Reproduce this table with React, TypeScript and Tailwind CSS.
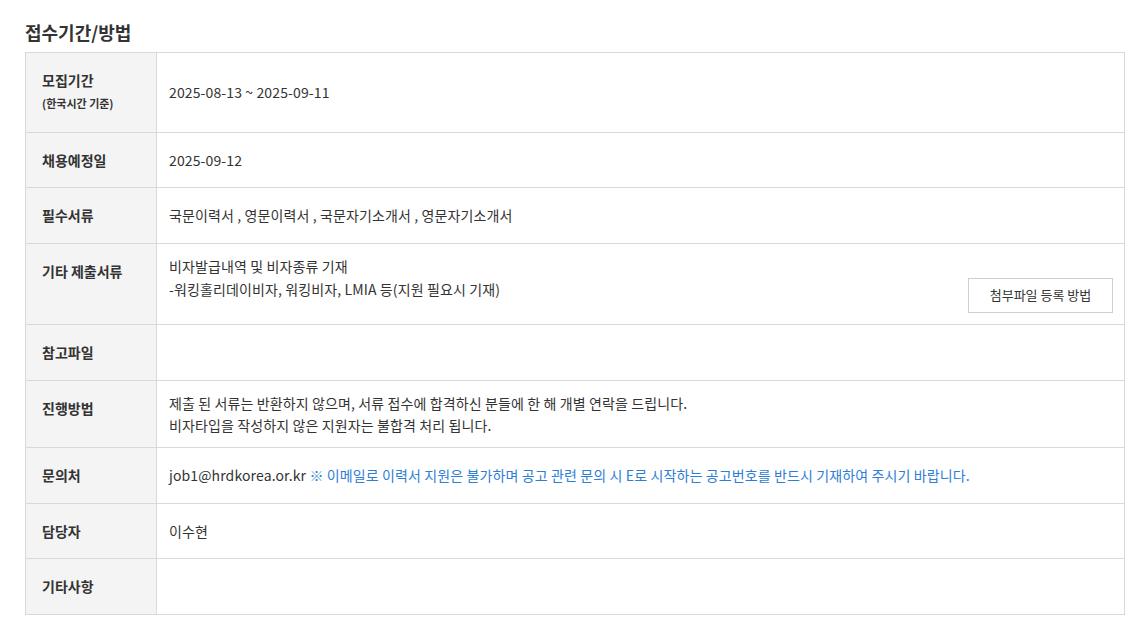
import React from "react";

const font = { fontFamily: '"Noto Sans CJK KR", "Noto Sans", sans-serif' };

function Row({
  h,
  label,
  children,
}: {
  h: string;
  label: React.ReactNode;
  children?: React.ReactNode;
}) {
  return (
    <div className={`grid grid-cols-[131px_1fr] ${h} border-b border-[#d9d9d9]`}>
      <div className="bg-[#f4f4f4] border-r border-[#d9d9d9] pl-[16px] pt-[16px]">{label}</div>
      <div className="flex flex-col justify-center pl-[12px] pr-[11px] pb-[1px] text-[14px] leading-[22px] tracking-[0.12px] text-[#333]">
        {children}
      </div>
    </div>
  );
}

function Label({ children }: { children: React.ReactNode }) {
  return <div className="text-[14px] leading-[22px] font-bold text-[#333]">{children}</div>;
}

export default function App() {
  return (
    <div className="bg-white w-[1148px] h-[627px]" style={font}>
      <div className="pl-[25px] pt-[20px]">
        <h2 className="text-[18px] leading-[24px] font-bold text-[#333] mb-[8px]">접수기간/방법</h2>
        <div className="w-[1100px] border-t border-l border-r border-[#d9d9d9]">
          <Row
            h="h-[80px]"
            label={
              <>
                <Label>모집기간</Label>
                <div className="mt-[4px] text-[11px] leading-[16px] font-bold text-[#333]">(한국시간 기준)</div>
              </>
            }
          >
            <div>2025-08-13 ~ 2025-09-11</div>
          </Row>
          <Row h="h-[55px]" label={<Label>채용예정일</Label>}>
            <div>2025-09-12</div>
          </Row>
          <Row h="h-[56px]" label={<Label>필수서류</Label>}>
            <div>국문이력서 , 영문이력서 , 국문자기소개서 , 영문자기소개서</div>
          </Row>
          <Row h="h-[81px]" label={<Label>기타 제출서류</Label>}>
            <div className="leading-[23px]">
              <div>비자발급내역 및 비자종류 기재</div>
              <div>-워킹홀리데이비자, 워킹비자, LMIA 등(지원 필요시 기재)</div>
            </div>
            <button className="self-end -mt-[23px] h-[35px] w-[145px] border border-[#cfcfcf] bg-white text-[13px] tracking-normal text-[#333]">
              첨부파일 등록 방법
            </button>
          </Row>
          <Row h="h-[56px]" label={<Label>참고파일</Label>} />
          <Row h="h-[67px]" label={<Label>진행방법</Label>}>
            <div>제출 된 서류는 반환하지 않으며, 서류 접수에 합격하신 분들에 한 해 개별 연락을 드립니다.</div>
            <div>비자타입을 작성하지 않은 지원자는 불합격 처리 됩니다.</div>
          </Row>
          <Row h="h-[56px]" label={<Label>문의처</Label>}>
            <div>
              job1@hrdkorea.or.kr{" "}
              <span className="text-[#2d7ed5]">
                ※ 이메일로 이력서 지원은 불가하며 공고 관련 문의 시 E로 시작하는 공고번호를 반드시 기재하여 주시기 바랍니다.
              </span>
            </div>
          </Row>
          <Row h="h-[55px]" label={<Label>담당자</Label>}>
            <div>이수현</div>
          </Row>
          <Row h="h-[56px]" label={<Label>기타사항</Label>} />
        </div>
      </div>
    </div>
  );
}
